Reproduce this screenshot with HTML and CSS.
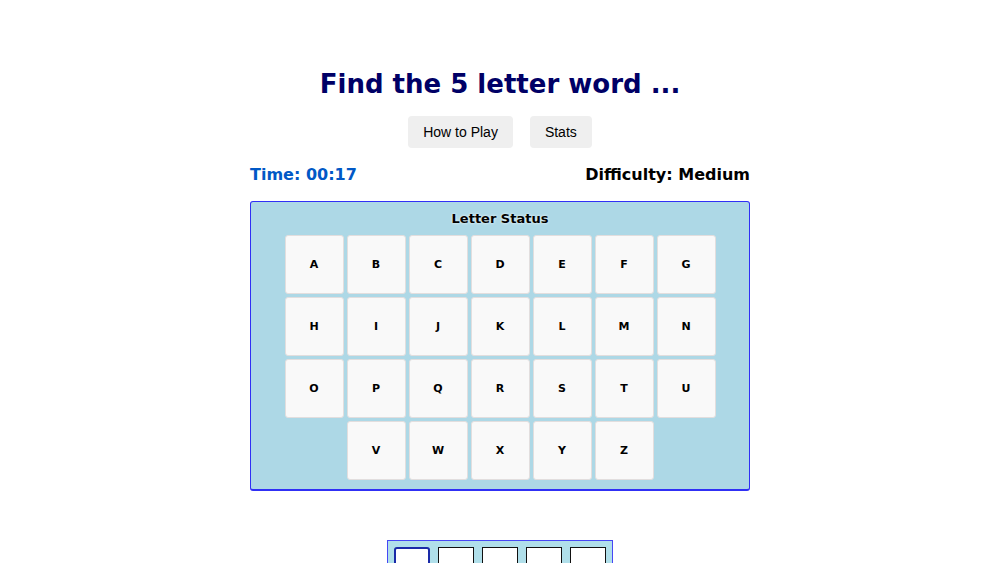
FILE: index.html
```html
<!DOCTYPE html>
<html lang="en">
<head>
    <meta charset="UTF-8">
    <meta name="viewport" content="width=device-width, initial-scale=1.0">
    <title>Find the 5 letter word</title>
    <link rel="stylesheet" href="styles.css">
</head>
<body>
    <div class="game">
        <h1>Find the 5 letter word ...</h1>

        <div class="menu">
            <button>How to Play</button>
            <button>Stats</button>
        </div>

        <div class="info-bar">
            <span class="timer">Time: 00:17</span>
            <span class="difficulty">Difficulty: Medium</span>
        </div>

        <div class="letter-status">
            <h2>Letter Status</h2>
            <div class="keys">
                <div class="key">A</div><div class="key">B</div><div class="key">C</div><div class="key">D</div><div class="key">E</div><div class="key">F</div><div class="key">G</div>
                <div class="key">H</div><div class="key">I</div><div class="key">J</div><div class="key">K</div><div class="key">L</div><div class="key">M</div><div class="key">N</div>
                <div class="key">O</div><div class="key">P</div><div class="key">Q</div><div class="key">R</div><div class="key">S</div><div class="key">T</div><div class="key">U</div>
                <div class="key col-2">V</div><div class="key">W</div><div class="key">X</div><div class="key">Y</div><div class="key">Z</div>
            </div>
        </div>

        <div class="guesses">
            <div class="guess-row">
                <div class="cell active"></div>
                <div class="cell"></div>
                <div class="cell"></div>
                <div class="cell"></div>
                <div class="cell"></div>
            </div>
        </div>
    </div>
</body>
</html>
```

FILE: styles.css
```css
body {
    margin: 0;
    font-family: 'DejaVu Sans', Verdana, sans-serif;
    background: #fff;
    color: #000;
}
.game {
    width: 500px;
    margin: 0 auto;
}
h1 {
    margin: 67px 0 0;
    font-size: 26px;
    line-height: 34px;
    text-align: center;
    color: #000066;
}
.menu {
    display: flex;
    justify-content: center;
    gap: 17px;
    margin-top: 15px;
}
.menu button {
    height: 32px;
    padding: 0 15px;
    border: none;
    border-radius: 4px;
    background-color: #efefef;
    font-family: 'Liberation Sans', Arial, sans-serif;
    font-size: 14px;
    color: #000;
}
.info-bar {
    display: flex;
    justify-content: space-between;
    margin-top: 17px;
    font-size: 16px;
    line-height: 20px;
    font-weight: bold;
}
.timer {
    color: #0058c6;
}
.letter-status {
    margin-top: 16px;
    padding: 8px 0 9px;
    background-color: #add8e6;
    border: 1px solid #3030f5;
    border-bottom-width: 2px;
    border-radius: 3px;
}
.letter-status h2 {
    margin: 0 0 8px;
    font-size: 13px;
    line-height: 17px;
    text-align: center;
    text-shadow: 0 0 3px #fff;
}
.keys {
    display: grid;
    grid-template-columns: repeat(7, 59px);
    grid-auto-rows: 59px;
    gap: 3px;
    justify-content: center;
}
.key {
    display: flex;
    align-items: center;
    justify-content: center;
    background-color: #f9f9f9;
    border: 1px solid #e2dede;
    border-radius: 3px;
    font-size: 11px;
    font-weight: bold;
}
.key.col-2 {
    grid-column-start: 2;
}
.guesses {
    width: 224px;
    margin: 49px auto 0;
    padding: 6px 0 20px;
    background-color: #b0dfea;
    border: 1px solid #4747f5;
}
.guess-row {
    display: flex;
    justify-content: center;
    gap: 8px;
}
.cell {
    width: 34px;
    height: 34px;
    background: #fff;
    border: 1px solid #111;
}
.cell.active {
    width: 32px;
    height: 32px;
    border: 2px solid #1a2aa8;
    border-radius: 3px;
}
```
